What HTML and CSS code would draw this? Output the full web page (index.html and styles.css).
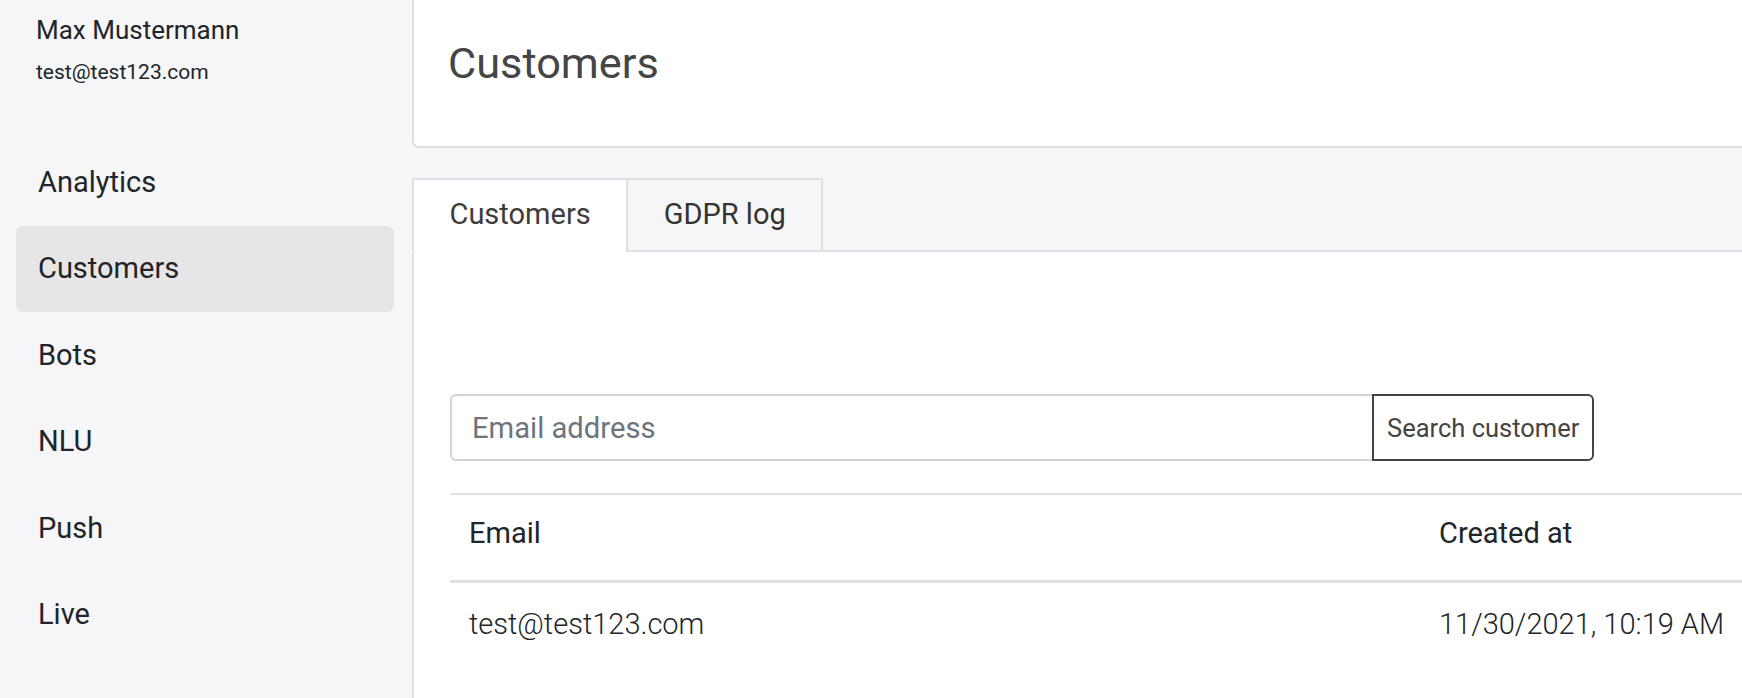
FILE: index.html
```html
<!DOCTYPE html>
<html lang="en">
<head>
<meta charset="utf-8">
<title>Customers</title>
<link rel="stylesheet" href="styles.css">
</head>
<body>
<div class="app">
  <aside class="sidebar">
    <div class="user">
      <div class="user-name">Max Mustermann</div>
      <div class="user-email">test@test123.com</div>
    </div>
    <nav class="nav">
      <a class="nav-item">Analytics</a>
      <a class="nav-item active">Customers</a>
      <a class="nav-item">Bots</a>
      <a class="nav-item">NLU</a>
      <a class="nav-item">Push</a>
      <a class="nav-item">Live</a>
    </nav>
  </aside>
  <main class="main">
    <header class="page-header">
      <h1 class="page-title">Customers</h1>
    </header>
    <ul class="tabs">
      <li class="tab active">Customers</li>
      <li class="tab">GDPR log</li>
    </ul>
    <section class="panel">
      <form class="search">
        <input class="search-input" type="text" placeholder="Email address">
        <button class="search-btn" type="button">Search customer</button>
      </form>
      <table class="table">
        <colgroup><col class="col-email"><col></colgroup>
        <thead>
          <tr><th>Email</th><th>Created at</th></tr>
        </thead>
        <tbody>
          <tr><td>test@test123.com</td><td>11/30/2021, 10:19 AM</td></tr>
        </tbody>
      </table>
    </section>
  </main>
</div>
</body>
</html>
```

FILE: styles.css
```css
html, body {
  margin: 0;
  padding: 0;
  overflow: hidden;
  height: 100%;
}
body {
  background: #f6f6f8;
  font-family: Roboto, "Liberation Sans", Arial, sans-serif;
  color: #212529;
}
.app {
  display: flex;
  width: 1780px;
  min-height: 698px;
}
.sidebar {
  width: 412px;
  flex: none;
  box-sizing: border-box;
  padding: 15px 18px 0 16px;
}
.user {
  padding-left: 20px;
}
.user-name {
  font-size: 26px;
  line-height: normal;
}
.user-email {
  font-size: 21px;
  line-height: normal;
  margin-top: 15px;
}
.nav {
  display: flex;
  flex-direction: column;
  margin-top: 55px;
}
.nav-item {
  display: block;
  font-size: 29px;
  line-height: normal;
  padding: 25.5px 0 27px 22px;
  border-radius: 7px;
  color: #212529;
}
.nav-item.active {
  background: #e6e6e6;
}
.main {
  flex: 1;
  min-width: 0;
  display: flex;
  flex-direction: column;
}
.page-header {
  background: #fff;
  border-left: 2px solid #dedede;
  border-bottom: 2px solid #dedede;
  border-bottom-left-radius: 7px;
  padding: 37.5px 0 57px 34px;
}
.page-title {
  margin: 0;
  font-size: 43.3px;
  font-weight: 400;
  line-height: normal;
  color: #454545;
}
.tabs {
  list-style: none;
  margin: 30px 0 0;
  padding: 0;
  display: flex;
  border-bottom: 2px solid #dee2e6;
}
.tab {
  font-size: 29px;
  line-height: normal;
  padding: 17.5px 35.5px 18.5px;
  border: 2px solid #dee2e6;
  margin-bottom: -2px;
  color: #333;
}
.tab.active {
  background: #fff;
  border-bottom-color: #fff;
  border-right: 0;
  color: #3d3d3d;
}
.panel {
  flex: 1;
  background: #fff;
  border-left: 2px solid #dee2e6;
  padding: 142.5px 36px 0 36px;
}
.search {
  display: flex;
  margin: 0;
}
.search-input {
  width: 922px;
  height: 67px;
  box-sizing: border-box;
  border: 2px solid #ced4da;
  border-right: 0;
  border-radius: 6px 0 0 6px;
  padding: 0 19px 0 20px;
  font-family: inherit;
  font-size: 29.2px;
  color: #212529;
  outline: none;
}
.search-input::placeholder {
  color: #6c757d;
}
.search-btn {
  height: 67px;
  box-sizing: border-box;
  border: 2px solid #444;
  border-radius: 0 6px 6px 0;
  background: #fff;
  padding: 0 13px;
  font-family: inherit;
  font-size: 25.5px;
  color: #444;
}
.table {
  width: 100%;
  border-collapse: collapse;
  table-layout: fixed;
  margin-top: 31.5px;
  border-top: 2px solid #dee2e6;
}
.col-email {
  width: 970px;
}
.table th,
.table td {
  text-align: left;
  font-size: 29px;
  line-height: normal;
  white-space: nowrap;
  color: #212529;
}
.table th {
  font-weight: 400;
  padding: 21.5px 19px 30px;
  border-bottom: 3.5px solid #dee2e6;
}
.table td {
  font-weight: 300;
  padding: 24px 19px 28px;
}
```
